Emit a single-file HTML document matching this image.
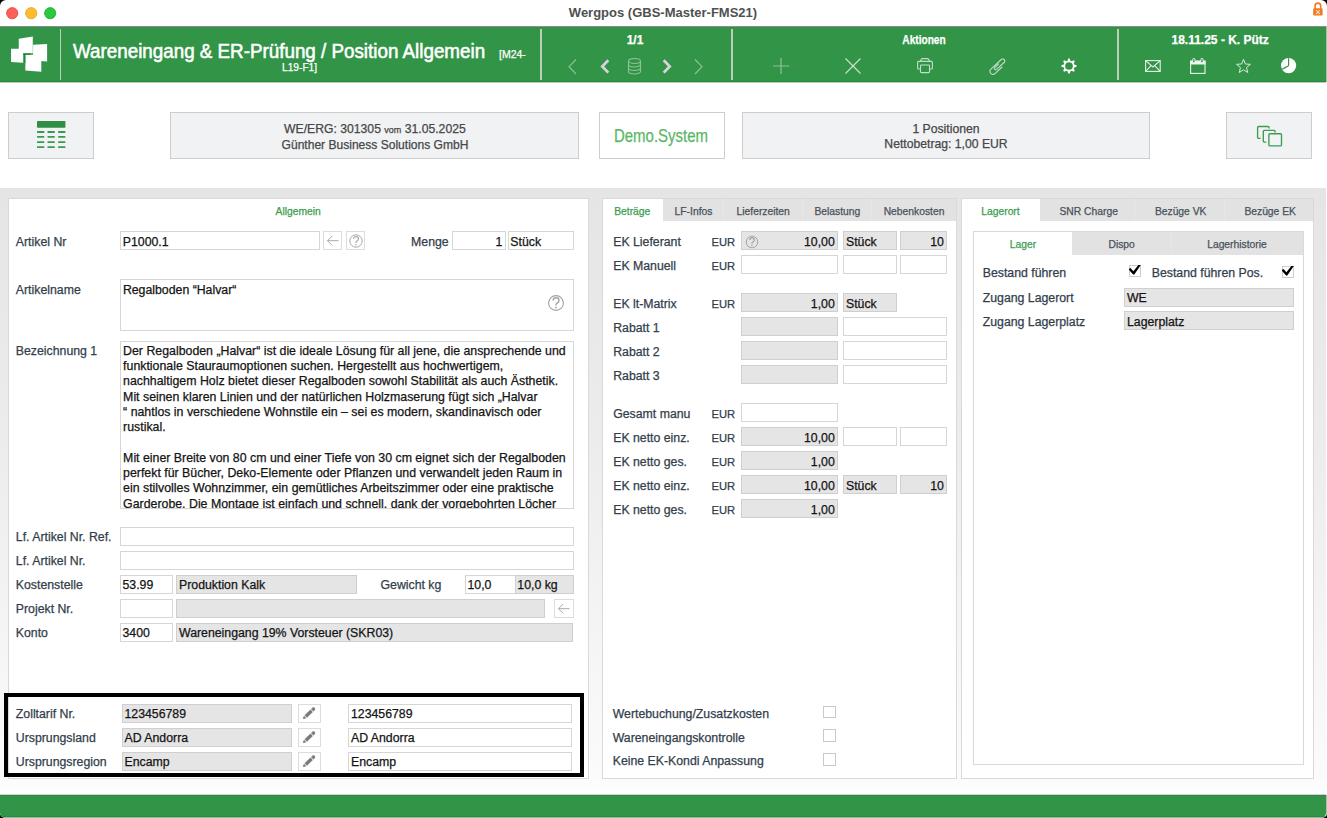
<!DOCTYPE html><html><head><meta charset="utf-8"><style>
html,body{margin:0;padding:0;background:#000;}
#w{position:absolute;left:0;top:0;width:1327px;height:818px;background:#fff;border-radius:6px 6px 5px 5px;overflow:hidden;}
.t{position:absolute;white-space:nowrap;font-family:"Liberation Sans",sans-serif;-webkit-text-stroke:0.25px currentColor;}
.b{position:absolute;box-sizing:border-box;}
svg{overflow:visible}
</style></head><body><div id="w">
<svg style="position:absolute;left:6.0px;top:6.5px;" width="12.4" height="12.4" viewBox="0 0 12.4 12.4"><circle cx="6.2" cy="6.2" r="5.6" fill="#fe5f57" stroke="#e0443e" stroke-width="0.8"/></svg>
<svg style="position:absolute;left:24.8px;top:6.5px;" width="12.4" height="12.4" viewBox="0 0 12.4 12.4"><circle cx="6.2" cy="6.2" r="5.6" fill="#febc2e" stroke="#dea123" stroke-width="0.8"/></svg>
<svg style="position:absolute;left:43.8px;top:6.5px;" width="12.4" height="12.4" viewBox="0 0 12.4 12.4"><circle cx="6.2" cy="6.2" r="5.6" fill="#28c840" stroke="#1aab29" stroke-width="0.8"/></svg>
<div class="t" style="left:663px;top:5.6px;font-size:13px;line-height:13px;color:#505050;font-weight:700;transform:translateX(-50%);-webkit-text-stroke:0;">Wergpos (GBS-Master-FMS21)</div>
<svg style="position:absolute;left:1313px;top:2.1px;" width="10" height="14" viewBox="0 0 10 14"><path d="M2.1 7 V3.9 A2.8 2.8 0 0 1 7.7 3.9 V7" fill="none" stroke="#f07a22" stroke-width="1.6"/><rect x="0.2" y="6.3" width="9.4" height="7.3" rx="0.8" fill="#f07a22"/><path d="M3 8 L6.8 12.2 M6.8 8 L3 12.2" stroke="#fcdcc2" stroke-width="1.1"/></svg>
<div class="b" style="left:0px;top:26px;width:1326px;height:1px;background:#8d8d8d;"></div>
<div class="b" style="left:0px;top:27px;width:1326px;height:55px;background:#329447;"></div>
<div class="b" style="left:1326px;top:26px;width:1px;height:56px;background:#9cc6a4;"></div>
<div class="b" style="left:0px;top:81px;width:1326px;height:1px;background:#1f8b37;"></div>
<div class="b" style="left:0px;top:82px;width:1326px;height:1px;background:#c4c8c4;"></div>
<div class="b" style="left:59.8px;top:29px;width:1.6px;height:51px;background:#b9cfbc;"></div>
<div class="b" style="left:540.3px;top:29px;width:1.6px;height:51px;background:#b9cfbc;"></div>
<div class="b" style="left:731.3px;top:29px;width:1.6px;height:51px;background:#b9cfbc;"></div>
<div class="b" style="left:1117.3px;top:29px;width:1.6px;height:51px;background:#b9cfbc;"></div>
<svg style="position:absolute;left:0px;top:0px;" width="60" height="82" viewBox="0 0 60 82">
<polygon points="18.75,38.8 32.8,36.6 32.8,53.3 18.75,53.3" fill="#fff"/>
<polygon points="11.05,48.7 23.2,48.7 23.2,62.7 11.05,61.9" fill="#fff"/>
<polygon points="33,44.85 47.1,44 47.1,61.4 33,60.6" fill="#fff"/>
<polygon points="25.35,54.75 41.3,54.75 41.3,71.8 25.35,70.4" fill="#fff"/>
<path d="M23.2 54.1 H30.6 M24.7 54.1 V62.8" stroke="#1d8637" stroke-width="1.3" fill="none"/>
<path d="M32.9 45 V53" stroke="#cfe5d4" stroke-width="0.8"/>
</svg>
<div class="t" style="left:73.3px;top:41.17px;font-size:20px;line-height:20px;color:#fff;font-weight:400;transform:scaleX(0.94);transform-origin:0 0;-webkit-text-stroke:0.55px #fff;">Wareneingang &amp; ER-Prüfung / Position Allgemein</div>
<div class="t" style="left:499px;top:48.71px;font-size:10.5px;line-height:10.5px;color:#fff;font-weight:400;">[M24-</div>
<div class="t" style="left:282px;top:63.37px;font-size:10.2px;line-height:10.2px;color:#fff;font-weight:400;">L19-F1]</div>
<div class="t" style="left:635px;top:34.04px;font-size:12px;line-height:12px;color:#fff;font-weight:700;transform:translateX(-50%);">1/1</div>
<div class="t" style="left:924.4px;top:33.74px;font-size:12px;line-height:12px;color:#fff;font-weight:700;transform:translateX(-50%);transform:translateX(-50%) scaleX(0.845);">Aktionen</div>
<div class="t" style="left:1220.2px;top:33.94px;font-size:12px;line-height:12px;color:#fff;font-weight:700;transform:translateX(-50%);">18.11.25 - K. Pütz</div>
<svg style="position:absolute;left:568px;top:58.5px;" width="9" height="16" viewBox="0 0 9 16"><path d="M8 0.5 L1 7.7 L8 15" fill="none" stroke="#8fc29a" stroke-width="1.1"/></svg>
<svg style="position:absolute;left:600px;top:58.8px;" width="10" height="15" viewBox="0 0 10 15"><path d="M8.3 1.2 L2.3 7.4 L8.3 13.6" fill="none" stroke="#d9d2dc" stroke-width="2.8"/></svg>
<svg style="position:absolute;left:628px;top:57.8px;" width="14" height="17" viewBox="0 0 14 17"><g fill="none" stroke="#8fc29a" stroke-width="1.1"><ellipse cx="6.5" cy="3" rx="6" ry="2.5"/><path d="M0.5 3 V13.5 A6 2.5 0 0 0 12.5 13.5 V3"/><path d="M0.5 6.5 A6 2.5 0 0 0 12.5 6.5 M0.5 10 A6 2.5 0 0 0 12.5 10"/></g></svg>
<svg style="position:absolute;left:662px;top:58.8px;" width="10" height="15" viewBox="0 0 10 15"><path d="M1.7 1.2 L7.7 7.4 L1.7 13.6" fill="none" stroke="#d9d2dc" stroke-width="2.8"/></svg>
<svg style="position:absolute;left:694.4px;top:58.5px;" width="9" height="16" viewBox="0 0 9 16"><path d="M1 0.5 L8 7.7 L1 15" fill="none" stroke="#8fc29a" stroke-width="1.1"/></svg>
<svg style="position:absolute;left:773px;top:58px;" width="16" height="16" viewBox="0 0 16 16"><path d="M8 0 V16 M0 8 H16" stroke="#8fc29a" stroke-width="1.2"/></svg>
<svg style="position:absolute;left:844.8px;top:58px;" width="16" height="16" viewBox="0 0 16 16"><path d="M0.5 0.5 L15.5 15.5 M15.5 0.5 L0.5 15.5" stroke="#cde3d1" stroke-width="1.1"/></svg>
<svg style="position:absolute;left:917px;top:58px;" width="17" height="16" viewBox="0 0 17 16"><g fill="none" stroke="#c3dec8" stroke-width="1.1"><path d="M3.4 3.2 L4.6 0.9 Q4.9 0.6 5.4 0.6 H10.6 Q11.1 0.6 11.4 0.9 L12.6 3.2"/><path d="M3.3 11 H1.5 Q0.6 11 0.6 10 V4.4 Q0.6 3.4 1.6 3.4 H14.4 Q15.4 3.4 15.4 4.4 V10 Q15.4 11 14.5 11 H12.7"/><rect x="3.5" y="7" width="9" height="7.6" rx="0.8"/></g></svg>
<svg style="position:absolute;left:984px;top:54px;" width="26" height="24" viewBox="0 0 26 24"><path d="M18.28 12.78 L10.98 19.58 L10.98 19.58 L10.34 20.03 L9.61 20.31 L8.83 20.38 L8.06 20.25 L7.35 19.93 L6.75 19.43 L6.30 18.79 L6.02 18.06 L5.95 17.28 L6.08 16.51 L6.40 15.80 L6.90 15.20 L6.90 15.20 L17.27 5.54 L17.27 5.54 L17.71 5.23 L18.22 5.04 L18.77 4.98 L19.31 5.07 L19.81 5.30 L20.23 5.65 L20.54 6.09 L20.74 6.61 L20.79 7.15 L20.70 7.69 L20.47 8.19 L20.12 8.61 L19.99 8.46 L12.54 15.40 L12.54 15.40 L12.26 15.60 L11.95 15.71 L11.61 15.75 L11.28 15.69 L10.97 15.55 L10.71 15.33 L10.51 15.06 L10.39 14.74 L10.36 14.41 L10.42 14.07 L10.56 13.76 L10.77 13.50 L10.77 13.50 L14.86 9.69" fill="none" stroke="#bfdcc5" stroke-width="1.15" stroke-linejoin="round"/></svg>
<svg style="position:absolute;left:1061.3px;top:58px;" width="16" height="16" viewBox="0 0 16 16"><polygon points="12.60,6.30 15.50,7.25 15.50,8.75 12.60,9.70" fill="#fff"/><polygon points="12.45,10.05 13.83,12.77 12.77,13.83 10.05,12.45" fill="#fff"/><polygon points="9.70,12.60 8.75,15.50 7.25,15.50 6.30,12.60" fill="#fff"/><polygon points="5.95,12.45 3.23,13.83 2.17,12.77 3.55,10.05" fill="#fff"/><polygon points="3.40,9.70 0.50,8.75 0.50,7.25 3.40,6.30" fill="#fff"/><polygon points="3.55,5.95 2.17,3.23 3.23,2.17 5.95,3.55" fill="#fff"/><polygon points="6.30,3.40 7.25,0.50 8.75,0.50 9.70,3.40" fill="#fff"/><polygon points="10.05,3.55 12.77,2.17 13.83,3.23 12.45,5.95" fill="#fff"/><circle cx="8" cy="8" r="4.6" fill="none" stroke="#fff" stroke-width="1.5"/></svg>
<svg style="position:absolute;left:1144.8px;top:60.2px;" width="16" height="12" viewBox="0 0 16 12"><g fill="none" stroke="#e6f0e8" stroke-width="1.1"><rect x="0.6" y="0.6" width="14.6" height="10.8"/><path d="M0.6 0.6 L7.9 7 L15.2 0.6 M0.6 11.4 L6 5.6 M15.2 11.4 L9.8 5.6"/></g></svg>
<svg style="position:absolute;left:1189.8px;top:58px;" width="16" height="16" viewBox="0 0 16 16"><g fill="none" stroke="#eef5ef" stroke-width="1.1"><rect x="0.6" y="3.2" width="14.4" height="12.2"/></g><rect x="0.1" y="2.7" width="15.4" height="3.8" fill="#eef5ef"/><g fill="#329447" stroke="#eef5ef" stroke-width="1"><rect x="2.7" y="0.5" width="2.3" height="4.4" rx="1.15"/><rect x="10.8" y="0.5" width="2.3" height="4.4" rx="1.15"/></g></svg>
<svg style="position:absolute;left:1236px;top:58.9px;" width="15" height="14" viewBox="0 0 15 14"><polygon points="7.50,0.30 9.38,5.01 14.44,5.34 10.54,8.59 11.79,13.51 7.50,10.80 3.21,13.51 4.46,8.59 0.56,5.34 5.62,5.01" fill="none" stroke="#d8e9dc" stroke-width="1.0" stroke-linejoin="round"/></svg>
<svg style="position:absolute;left:1280.7px;top:58.3px;" width="16" height="16" viewBox="0 0 16 16"><circle cx="7.6" cy="7.6" r="7.6" fill="#fff"/><path d="M7.6 7.7 V0.3 M7.6 7.7 L1.4 11.1" stroke="#329447" stroke-width="1.2"/></svg>
<div class="b" style="left:8.4px;top:112px;width:85.3px;height:47.3px;background:#f1f2f4;border:1px solid #cdcdcd;"></div>
<svg style="position:absolute;left:36.5px;top:121.3px;" width="29" height="28" viewBox="0 0 29 28"><rect x="0" y="0" width="28.4" height="6.7" rx="0.6" fill="#2e8f45"/><rect x="0" y="10.1" width="7.3" height="1.8" rx="0.5" fill="#3a9a50"/><rect x="10.5" y="10.1" width="7.3" height="1.8" rx="0.5" fill="#3a9a50"/><rect x="21.1" y="10.1" width="7.3" height="1.8" rx="0.5" fill="#3a9a50"/><rect x="0" y="15.0" width="7.3" height="1.8" rx="0.5" fill="#3a9a50"/><rect x="10.5" y="15.0" width="7.3" height="1.8" rx="0.5" fill="#3a9a50"/><rect x="21.1" y="15.0" width="7.3" height="1.8" rx="0.5" fill="#3a9a50"/><rect x="0" y="20.200000000000003" width="7.3" height="1.8" rx="0.5" fill="#3a9a50"/><rect x="10.5" y="20.200000000000003" width="7.3" height="1.8" rx="0.5" fill="#3a9a50"/><rect x="21.1" y="20.200000000000003" width="7.3" height="1.8" rx="0.5" fill="#3a9a50"/><rect x="0" y="25.200000000000003" width="7.3" height="1.8" rx="0.5" fill="#3a9a50"/><rect x="10.5" y="25.200000000000003" width="7.3" height="1.8" rx="0.5" fill="#3a9a50"/><rect x="21.1" y="25.200000000000003" width="7.3" height="1.8" rx="0.5" fill="#3a9a50"/></svg>
<div class="b" style="left:170.4px;top:112px;width:409.0px;height:47.3px;background:#f1f2f4;border:1px solid #cdcdcd;"></div>
<div class="t" style="left:170.4px;width:409px;top:123.17px;font-size:12.2px;line-height:12.2px;color:#474747;text-align:center">WE/ERG: 301305 <span style="font-size:9px">vom</span> 31.05.2025</div>
<div class="t" style="left:375px;top:138.5px;font-size:12.05px;line-height:12.05px;color:#474747;font-weight:400;transform:translateX(-50%);">Günther Business Solutions GmbH</div>
<div class="b" style="left:598.5px;top:112px;width:126.0px;height:47.3px;background:#fff;border:1px solid #cdcdcd;"></div>
<div class="t" style="left:661.2px;top:127.24px;font-size:18.5px;line-height:18.5px;color:#5ab766;font-weight:400;transform:translateX(-50%);transform:translateX(-50%) scaleX(0.81);">Demo.System</div>
<div class="b" style="left:742px;top:112px;width:408.3px;height:47.3px;background:#f1f2f4;border:1px solid #cdcdcd;"></div>
<div class="t" style="left:946px;top:123.17px;font-size:12.2px;line-height:12.2px;color:#474747;font-weight:400;transform:translateX(-50%);">1 Positionen</div>
<div class="t" style="left:946px;top:138.37px;font-size:12.2px;line-height:12.2px;color:#474747;font-weight:400;transform:translateX(-50%);">Nettobetrag: 1,00 EUR</div>
<div class="b" style="left:1226.4px;top:112px;width:85.4px;height:47.3px;background:#f1f2f4;border:1px solid #cdcdcd;"></div>
<svg style="position:absolute;left:1256px;top:124.5px;" width="28" height="23" viewBox="0 0 28 23"><g fill="none" stroke="#3d9b52" stroke-width="1.35"><path d="M4.6 13.3 H2.6 Q1.6 13.3 1.6 12.3 V2.5 Q1.6 1.5 2.6 1.5 H12 Q13 1.5 13 2.5 V3.6"/><path d="M10.3 17.1 H8.3 Q7.3 17.1 7.3 16.1 V6.3 Q7.3 5.3 8.3 5.3 H18.1 Q19.1 5.3 19.1 6.3 V7.6"/><rect x="12.9" y="8.7" width="12.6" height="12.2" rx="1" fill="#f2f3f5"/></g></svg>
<div class="b" style="left:0;top:188px;width:1326px;height:607px;background:linear-gradient(#e5e5e5 0px,#ececec 250px,#fbfbfb 590px,#fff 607px)"></div>
<div class="b" style="left:8px;top:198px;width:581px;height:581px;background:#fff;border:1px solid #d9d9d9;"></div>
<div class="b" style="left:602px;top:198px;width:355px;height:581px;background:#fff;border:1px solid #d9d9d9;"></div>
<div class="b" style="left:961px;top:198px;width:352.5px;height:581px;background:#fff;border:1px solid #d9d9d9;"></div>
<div class="t" style="left:298.2px;top:206.88px;font-size:10.3px;line-height:10.3px;color:#3a9d50;font-weight:400;transform:translateX(-50%);">Allgemein</div>
<div class="t" style="left:15.8px;top:236.29px;font-size:12.3px;line-height:12.3px;color:#323e4b;font-weight:400;">Artikel Nr</div>
<div class="b" style="left:120px;top:231px;width:200px;height:19px;background:#fff;border:1px solid #d6d6d6;"></div>
<div class="t" style="left:122.8px;top:236.29px;font-size:12.3px;line-height:12.3px;color:#141414;font-weight:400;">P1000.1</div>
<div class="b" style="left:323px;top:231px;width:19px;height:19px;background:#fff;border:1px solid #dcdcdc;"></div>
<svg style="position:absolute;left:326px;top:234px;" width="14" height="14" viewBox="0 0 14 14"><path d="M12.5 6.7 H1.5 M6.2 2 L1.5 6.7 L6.2 11.4" fill="none" stroke="#a8a8a8" stroke-width="1"/></svg>
<div class="b" style="left:346px;top:231px;width:19px;height:19px;background:#fff;border:1px solid #dcdcdc;"></div>
<svg style="position:absolute;left:355.6px;top:240.6px;" width="1" height="1" viewBox="0 0 1 1"><circle cx="0" cy="0" r="6.2" fill="none" stroke="#a9a9a9" stroke-width="1"/><path d="M-2.38 -2.07 Q-2.38 -4.44 0 -4.44 Q2.48 -4.44 2.48 -2.17 Q2.48 -0.72 0.93 0 Q-0.10 0.62 -0.10 2.07" fill="none" stroke="#a9a9a9" stroke-width="1.19"/><circle cx="-0.10" cy="3.82" r="0.78" fill="#a9a9a9"/></svg>
<div class="t" style="left:411.1px;top:236.29px;font-size:12.3px;line-height:12.3px;color:#323e4b;font-weight:400;">Menge</div>
<div class="b" style="left:451.5px;top:231px;width:54.1px;height:19px;background:#fff;border:1px solid #d6d6d6;"></div>
<div class="t" style="left:502.3px;top:236.29px;font-size:12.3px;line-height:12.3px;color:#141414;font-weight:400;transform:translateX(-100%);">1</div>
<div class="b" style="left:508px;top:231px;width:65.6px;height:19px;background:#fff;border:1px solid #d6d6d6;"></div>
<div class="t" style="left:510.3px;top:236.29px;font-size:12.3px;line-height:12.3px;color:#141414;font-weight:400;">Stück</div>
<div class="t" style="left:15.8px;top:283.89px;font-size:12.3px;line-height:12.3px;color:#323e4b;font-weight:400;">Artikelname</div>
<div class="b" style="left:120px;top:279px;width:453.6px;height:52.3px;background:#fff;border:1px solid #d6d6d6;"></div>
<div class="t" style="left:122.9px;top:283.89px;font-size:12.3px;line-height:12.3px;color:#141414;font-weight:400;">Regalboden “Halvar“</div>
<svg style="position:absolute;left:556.2px;top:302.9px;" width="1" height="1" viewBox="0 0 1 1"><circle cx="0" cy="0" r="7.4" fill="none" stroke="#a3a3a3" stroke-width="1.1"/><path d="M-2.84 -2.47 Q-2.84 -5.30 0 -5.30 Q2.96 -5.30 2.96 -2.59 Q2.96 -0.86 1.11 0 Q-0.12 0.74 -0.12 2.47" fill="none" stroke="#a3a3a3" stroke-width="1.42"/><circle cx="-0.12" cy="4.56" r="0.93" fill="#a3a3a3"/></svg>
<div class="t" style="left:15.8px;top:345.39px;font-size:12.3px;line-height:12.3px;color:#323e4b;font-weight:400;">Bezeichnung 1</div>
<div class="b" style="left:120px;top:341px;width:453.6px;height:168px;background:#fff;border:1px solid #d6d6d6;"></div>
<div class="b" style="left:121px;top:342px;width:451px;height:166px;overflow:hidden;">
<div class="t" style="left:2.1px;top:1.88px;font-size:12.35px;line-height:15.28px;color:#141414">Der Regalboden „Halvar“ ist die ideale Lösung für all jene, die ansprechende und<br>funktionale Stauraumoptionen suchen. Hergestellt aus hochwertigem,<br>nachhaltigem Holz bietet dieser Regalboden sowohl Stabilität als auch Ästhetik.<br>Mit seinen klaren Linien und der natürlichen Holzmaserung fügt sich „Halvar<br>“ nahtlos in verschiedene Wohnstile ein – sei es modern, skandinavisch oder<br>rustikal.<br>&nbsp;<br>Mit einer Breite von 80 cm und einer Tiefe von 30 cm eignet sich der Regalboden<br>perfekt für Bücher, Deko-Elemente oder Pflanzen und verwandelt jeden Raum in<br>ein stilvolles Wohnzimmer, ein gemütliches Arbeitszimmer oder eine praktische<br>Garderobe. Die Montage ist einfach und schnell, dank der vorgebohrten Löcher</div></div>
<div class="t" style="left:15.8px;top:531.49px;font-size:12.3px;line-height:12.3px;color:#323e4b;font-weight:400;">Lf. Artikel Nr. Ref.</div>
<div class="t" style="left:15.8px;top:555.49px;font-size:12.3px;line-height:12.3px;color:#323e4b;font-weight:400;">Lf. Artikel Nr.</div>
<div class="t" style="left:15.8px;top:579.49px;font-size:12.3px;line-height:12.3px;color:#323e4b;font-weight:400;">Kostenstelle</div>
<div class="t" style="left:15.8px;top:603.49px;font-size:12.3px;line-height:12.3px;color:#323e4b;font-weight:400;">Projekt Nr.</div>
<div class="t" style="left:15.8px;top:627.49px;font-size:12.3px;line-height:12.3px;color:#323e4b;font-weight:400;">Konto</div>
<div class="b" style="left:120px;top:527px;width:453.6px;height:19px;background:#fff;border:1px solid #d6d6d6;"></div>
<div class="b" style="left:120px;top:551px;width:453.6px;height:19px;background:#fff;border:1px solid #d6d6d6;"></div>
<div class="b" style="left:120px;top:575px;width:53px;height:19px;background:#fff;border:1px solid #d6d6d6;"></div>
<div class="t" style="left:122.5px;top:579.49px;font-size:12.3px;line-height:12.3px;color:#141414;font-weight:400;">53.99</div>
<div class="b" style="left:176.4px;top:575px;width:180.2px;height:19px;background:#e5e5e5;border:1px solid #cfcfcf;"></div>
<div class="t" style="left:179px;top:579.49px;font-size:12.3px;line-height:12.3px;color:#141414;font-weight:400;">Produktion Kalk</div>
<div class="t" style="left:380.5px;top:579.49px;font-size:12.3px;line-height:12.3px;color:#323e4b;font-weight:400;">Gewicht kg</div>
<div class="b" style="left:465px;top:575px;width:50.5px;height:19px;background:#fff;border:1px solid #d6d6d6;"></div>
<div class="t" style="left:467.5px;top:579.49px;font-size:12.3px;line-height:12.3px;color:#141414;font-weight:400;">10,0</div>
<div class="b" style="left:514.8px;top:575px;width:58.8px;height:19px;background:#e5e5e5;border:1px solid #cfcfcf;"></div>
<div class="t" style="left:517.3px;top:579.49px;font-size:12.3px;line-height:12.3px;color:#141414;font-weight:400;">10,0 kg</div>
<div class="b" style="left:120px;top:599px;width:53px;height:19px;background:#fff;border:1px solid #d6d6d6;"></div>
<div class="b" style="left:176.4px;top:599px;width:368.9px;height:19px;background:#e5e5e5;border:1px solid #cfcfcf;"></div>
<div class="b" style="left:554.4px;top:599px;width:19.2px;height:19px;background:#fff;border:1px solid #dcdcdc;"></div>
<svg style="position:absolute;left:557px;top:602px;" width="14" height="14" viewBox="0 0 14 14"><path d="M12.5 6.7 H1.5 M6.2 2 L1.5 6.7 L6.2 11.4" fill="none" stroke="#a8a8a8" stroke-width="1"/></svg>
<div class="b" style="left:120px;top:623px;width:53px;height:19px;background:#fff;border:1px solid #d6d6d6;"></div>
<div class="t" style="left:122.5px;top:627.49px;font-size:12.3px;line-height:12.3px;color:#141414;font-weight:400;">3400</div>
<div class="b" style="left:176.4px;top:623px;width:396.4px;height:19px;background:#e5e5e5;border:1px solid #cfcfcf;"></div>
<div class="t" style="left:179px;top:627.49px;font-size:12.3px;line-height:12.3px;color:#141414;font-weight:400;">Wareneingang 19% Vorsteuer (SKR03)</div>
<div class="b" style="left:4px;top:693px;width:580px;height:84px;border:4px solid #000;"></div>
<div class="t" style="left:15.8px;top:708.49px;font-size:12.3px;line-height:12.3px;color:#323e4b;font-weight:400;">Zolltarif Nr.</div>
<div class="b" style="left:122px;top:704px;width:170px;height:19px;background:#e5e5e5;border:1px solid #cfcfcf;"></div>
<div class="t" style="left:124.5px;top:708.49px;font-size:12.3px;line-height:12.3px;color:#141414;font-weight:400;">123456789</div>
<div class="b" style="left:297.5px;top:704px;width:23.0px;height:18.5px;background:#fff;border:1px solid #dcdcdc;"></div>
<svg style="position:absolute;left:296px;top:702px;" width="26" height="22" viewBox="0 0 26 22"><polygon points="6.91,16.37 7.60,17.10 10.35,16.22 7.94,13.68" fill="#7b7b7b"/><polygon points="8.52,13.13 10.93,15.67 16.88,10.03 14.47,7.49" fill="#7b7b7b"/><polygon points="15.05,6.94 17.46,9.48 18.91,8.10 19.26,6.87 18.80,5.80 17.75,5.28 16.51,5.56" fill="#7b7b7b"/></svg>
<div class="b" style="left:348px;top:704px;width:224.4px;height:19px;background:#fff;border:1px solid #d6d6d6;"></div>
<div class="t" style="left:351px;top:708.49px;font-size:12.3px;line-height:12.3px;color:#141414;font-weight:400;">123456789</div>
<div class="t" style="left:15.8px;top:732.49px;font-size:12.3px;line-height:12.3px;color:#323e4b;font-weight:400;">Ursprungsland</div>
<div class="b" style="left:122px;top:728px;width:170px;height:19px;background:#e5e5e5;border:1px solid #cfcfcf;"></div>
<div class="t" style="left:124.5px;top:732.49px;font-size:12.3px;line-height:12.3px;color:#141414;font-weight:400;">AD Andorra</div>
<div class="b" style="left:297.5px;top:728px;width:23.0px;height:18.5px;background:#fff;border:1px solid #dcdcdc;"></div>
<svg style="position:absolute;left:296px;top:726px;" width="26" height="22" viewBox="0 0 26 22"><polygon points="6.91,16.37 7.60,17.10 10.35,16.22 7.94,13.68" fill="#7b7b7b"/><polygon points="8.52,13.13 10.93,15.67 16.88,10.03 14.47,7.49" fill="#7b7b7b"/><polygon points="15.05,6.94 17.46,9.48 18.91,8.10 19.26,6.87 18.80,5.80 17.75,5.28 16.51,5.56" fill="#7b7b7b"/></svg>
<div class="b" style="left:348px;top:728px;width:224.4px;height:19px;background:#fff;border:1px solid #d6d6d6;"></div>
<div class="t" style="left:351px;top:732.49px;font-size:12.3px;line-height:12.3px;color:#141414;font-weight:400;">AD Andorra</div>
<div class="t" style="left:15.8px;top:756.49px;font-size:12.3px;line-height:12.3px;color:#323e4b;font-weight:400;">Ursprungsregion</div>
<div class="b" style="left:122px;top:752px;width:170px;height:19px;background:#e5e5e5;border:1px solid #cfcfcf;"></div>
<div class="t" style="left:124.5px;top:756.49px;font-size:12.3px;line-height:12.3px;color:#141414;font-weight:400;">Encamp</div>
<div class="b" style="left:297.5px;top:752px;width:23.0px;height:18.5px;background:#fff;border:1px solid #dcdcdc;"></div>
<svg style="position:absolute;left:296px;top:750px;" width="26" height="22" viewBox="0 0 26 22"><polygon points="6.91,16.37 7.60,17.10 10.35,16.22 7.94,13.68" fill="#7b7b7b"/><polygon points="8.52,13.13 10.93,15.67 16.88,10.03 14.47,7.49" fill="#7b7b7b"/><polygon points="15.05,6.94 17.46,9.48 18.91,8.10 19.26,6.87 18.80,5.80 17.75,5.28 16.51,5.56" fill="#7b7b7b"/></svg>
<div class="b" style="left:348px;top:752px;width:224.4px;height:19px;background:#fff;border:1px solid #d6d6d6;"></div>
<div class="t" style="left:351px;top:756.49px;font-size:12.3px;line-height:12.3px;color:#141414;font-weight:400;">Encamp</div>
<div class="b" style="left:663px;top:199px;width:293px;height:22.3px;background:#e2e2e2;"></div>
<div class="b" style="left:723.1px;top:199px;width:1.0px;height:22.3px;background:#e7e7e7;"></div>
<div class="b" style="left:801.8px;top:199px;width:1.0px;height:22.3px;background:#e7e7e7;"></div>
<div class="b" style="left:871.4px;top:199px;width:1.0px;height:22.3px;background:#e7e7e7;"></div>
<div class="t" style="left:614.2px;top:207.18px;font-size:10.3px;line-height:10.3px;color:#3a9d50;font-weight:400;">Beträge</div>
<div class="t" style="left:674.6px;top:207.18px;font-size:10.3px;line-height:10.3px;color:#48525c;font-weight:400;">LF-Infos</div>
<div class="t" style="left:736.6px;top:207.18px;font-size:10.3px;line-height:10.3px;color:#48525c;font-weight:400;">Lieferzeiten</div>
<div class="t" style="left:814.4px;top:207.18px;font-size:10.3px;line-height:10.3px;color:#48525c;font-weight:400;">Belastung</div>
<div class="t" style="left:883.7px;top:207.18px;font-size:10.3px;line-height:10.3px;color:#48525c;font-weight:400;">Nebenkosten</div>
<div class="t" style="left:613.2px;top:235.59px;font-size:12.3px;line-height:12.3px;color:#323e4b;font-weight:400;">EK Lieferant</div>
<div class="t" style="left:711.5px;top:236.52px;font-size:11.2px;line-height:11.2px;color:#323e4b;font-weight:400;">EUR</div>
<div class="b" style="left:741px;top:231px;width:97px;height:19px;background:#e5e5e5;border:1px solid #cfcfcf;"></div>
<svg style="position:absolute;left:751.7px;top:242px;" width="1" height="1" viewBox="0 0 1 1"><circle cx="0" cy="0" r="5.8" fill="none" stroke="#a0a0a0" stroke-width="0.95"/><path d="M-2.22 -1.93 Q-2.22 -4.16 0 -4.16 Q2.32 -4.16 2.32 -2.03 Q2.32 -0.68 0.87 0 Q-0.10 0.58 -0.10 1.93" fill="none" stroke="#a0a0a0" stroke-width="1.11"/><circle cx="-0.10" cy="3.58" r="0.72" fill="#a0a0a0"/></svg>
<div class="t" style="left:834.8px;top:235.69px;font-size:12.3px;line-height:12.3px;color:#141414;font-weight:400;transform:translateX(-100%);">10,00</div>
<div class="b" style="left:843.3px;top:231px;width:53.9px;height:19px;background:#e5e5e5;border:1px solid #cfcfcf;"></div>
<div class="t" style="left:846px;top:235.69px;font-size:12.3px;line-height:12.3px;color:#141414;font-weight:400;">Stück</div>
<div class="b" style="left:900.3px;top:231px;width:46.7px;height:19px;background:#e5e5e5;border:1px solid #cfcfcf;"></div>
<div class="t" style="left:943.9px;top:235.69px;font-size:12.3px;line-height:12.3px;color:#141414;font-weight:400;transform:translateX(-100%);">10</div>
<div class="t" style="left:613.2px;top:259.59px;font-size:12.3px;line-height:12.3px;color:#323e4b;font-weight:400;">EK Manuell</div>
<div class="t" style="left:711.5px;top:260.52px;font-size:11.2px;line-height:11.2px;color:#323e4b;font-weight:400;">EUR</div>
<div class="b" style="left:741px;top:255px;width:97px;height:19px;background:#fff;border:1px solid #d6d6d6;"></div>
<div class="b" style="left:843.3px;top:255px;width:53.9px;height:19px;background:#fff;border:1px solid #d6d6d6;"></div>
<div class="b" style="left:900.3px;top:255px;width:46.7px;height:19px;background:#fff;border:1px solid #d6d6d6;"></div>
<div class="t" style="left:613.2px;top:297.59px;font-size:12.3px;line-height:12.3px;color:#323e4b;font-weight:400;">EK lt-Matrix</div>
<div class="t" style="left:711.5px;top:298.52px;font-size:11.2px;line-height:11.2px;color:#323e4b;font-weight:400;">EUR</div>
<div class="b" style="left:741px;top:293px;width:97px;height:19px;background:#e5e5e5;border:1px solid #cfcfcf;"></div>
<div class="t" style="left:834.8px;top:297.69px;font-size:12.3px;line-height:12.3px;color:#141414;font-weight:400;transform:translateX(-100%);">1,00</div>
<div class="b" style="left:843.3px;top:293px;width:53.9px;height:19px;background:#e5e5e5;border:1px solid #cfcfcf;"></div>
<div class="t" style="left:846px;top:297.69px;font-size:12.3px;line-height:12.3px;color:#141414;font-weight:400;">Stück</div>
<div class="t" style="left:613.2px;top:321.59px;font-size:12.3px;line-height:12.3px;color:#323e4b;font-weight:400;">Rabatt 1</div>
<div class="b" style="left:741px;top:317px;width:97px;height:19px;background:#e5e5e5;border:1px solid #cfcfcf;"></div>
<div class="b" style="left:843.3px;top:317px;width:103.7px;height:19px;background:#fff;border:1px solid #d6d6d6;"></div>
<div class="t" style="left:613.2px;top:345.59px;font-size:12.3px;line-height:12.3px;color:#323e4b;font-weight:400;">Rabatt 2</div>
<div class="b" style="left:741px;top:341px;width:97px;height:19px;background:#e5e5e5;border:1px solid #cfcfcf;"></div>
<div class="b" style="left:843.3px;top:341px;width:103.7px;height:19px;background:#fff;border:1px solid #d6d6d6;"></div>
<div class="t" style="left:613.2px;top:369.59px;font-size:12.3px;line-height:12.3px;color:#323e4b;font-weight:400;">Rabatt 3</div>
<div class="b" style="left:741px;top:365px;width:97px;height:19px;background:#e5e5e5;border:1px solid #cfcfcf;"></div>
<div class="b" style="left:843.3px;top:365px;width:103.7px;height:19px;background:#fff;border:1px solid #d6d6d6;"></div>
<div class="t" style="left:613.2px;top:407.59px;font-size:12.3px;line-height:12.3px;color:#323e4b;font-weight:400;">Gesamt manu</div>
<div class="t" style="left:711.5px;top:408.52px;font-size:11.2px;line-height:11.2px;color:#323e4b;font-weight:400;">EUR</div>
<div class="b" style="left:741px;top:403px;width:97px;height:19px;background:#fff;border:1px solid #d6d6d6;"></div>
<div class="t" style="left:613.2px;top:431.59px;font-size:12.3px;line-height:12.3px;color:#323e4b;font-weight:400;">EK netto einz.</div>
<div class="t" style="left:711.5px;top:432.52px;font-size:11.2px;line-height:11.2px;color:#323e4b;font-weight:400;">EUR</div>
<div class="b" style="left:741px;top:427px;width:97px;height:19px;background:#e5e5e5;border:1px solid #cfcfcf;"></div>
<div class="t" style="left:834.8px;top:431.69px;font-size:12.3px;line-height:12.3px;color:#141414;font-weight:400;transform:translateX(-100%);">10,00</div>
<div class="b" style="left:843.3px;top:427px;width:53.9px;height:19px;background:#fff;border:1px solid #d6d6d6;"></div>
<div class="b" style="left:900.3px;top:427px;width:46.7px;height:19px;background:#fff;border:1px solid #d6d6d6;"></div>
<div class="t" style="left:613.2px;top:455.59px;font-size:12.3px;line-height:12.3px;color:#323e4b;font-weight:400;">EK netto ges.</div>
<div class="t" style="left:711.5px;top:456.52px;font-size:11.2px;line-height:11.2px;color:#323e4b;font-weight:400;">EUR</div>
<div class="b" style="left:741px;top:451px;width:97px;height:19px;background:#e5e5e5;border:1px solid #cfcfcf;"></div>
<div class="t" style="left:834.8px;top:455.69px;font-size:12.3px;line-height:12.3px;color:#141414;font-weight:400;transform:translateX(-100%);">1,00</div>
<div class="t" style="left:613.2px;top:479.59px;font-size:12.3px;line-height:12.3px;color:#323e4b;font-weight:400;">EK netto einz.</div>
<div class="t" style="left:711.5px;top:480.52px;font-size:11.2px;line-height:11.2px;color:#323e4b;font-weight:400;">EUR</div>
<div class="b" style="left:741px;top:475px;width:97px;height:19px;background:#e5e5e5;border:1px solid #cfcfcf;"></div>
<div class="t" style="left:834.8px;top:479.69px;font-size:12.3px;line-height:12.3px;color:#141414;font-weight:400;transform:translateX(-100%);">10,00</div>
<div class="b" style="left:843.3px;top:475px;width:53.9px;height:19px;background:#e5e5e5;border:1px solid #cfcfcf;"></div>
<div class="t" style="left:846px;top:479.69px;font-size:12.3px;line-height:12.3px;color:#141414;font-weight:400;">Stück</div>
<div class="b" style="left:900.3px;top:475px;width:46.7px;height:19px;background:#e5e5e5;border:1px solid #cfcfcf;"></div>
<div class="t" style="left:943.9px;top:479.69px;font-size:12.3px;line-height:12.3px;color:#141414;font-weight:400;transform:translateX(-100%);">10</div>
<div class="t" style="left:613.2px;top:503.59px;font-size:12.3px;line-height:12.3px;color:#323e4b;font-weight:400;">EK netto ges.</div>
<div class="t" style="left:711.5px;top:504.52px;font-size:11.2px;line-height:11.2px;color:#323e4b;font-weight:400;">EUR</div>
<div class="b" style="left:741px;top:499px;width:97px;height:19px;background:#e5e5e5;border:1px solid #cfcfcf;"></div>
<div class="t" style="left:834.8px;top:503.69px;font-size:12.3px;line-height:12.3px;color:#141414;font-weight:400;transform:translateX(-100%);">1,00</div>
<div class="t" style="left:612.7px;top:708.29px;font-size:12.3px;line-height:12.3px;color:#323e4b;font-weight:400;">Wertebuchung/Zusatzkosten</div>
<div class="b" style="left:823px;top:705.9px;width:13px;height:12.5px;background:#fff;border:1px solid #c9c9c9;"></div>
<div class="t" style="left:612.7px;top:731.79px;font-size:12.3px;line-height:12.3px;color:#323e4b;font-weight:400;">Wareneingangskontrolle</div>
<div class="b" style="left:823px;top:729.4px;width:13px;height:12.5px;background:#fff;border:1px solid #c9c9c9;"></div>
<div class="t" style="left:612.7px;top:755.49px;font-size:12.3px;line-height:12.3px;color:#323e4b;font-weight:400;">Keine EK-Kondi Anpassung</div>
<div class="b" style="left:823px;top:753.1px;width:13px;height:12.5px;background:#fff;border:1px solid #c9c9c9;"></div>
<div class="b" style="left:1039.5px;top:199px;width:273.0px;height:22.3px;background:#e2e2e2;"></div>
<div class="b" style="left:1134.1px;top:199px;width:1.0px;height:22.3px;background:#e7e7e7;"></div>
<div class="b" style="left:1223.5px;top:199px;width:1.0px;height:22.3px;background:#e7e7e7;"></div>
<div class="t" style="left:981.3px;top:206.98px;font-size:10.3px;line-height:10.3px;color:#3a9d50;font-weight:400;">Lagerort</div>
<div class="t" style="left:1059.5px;top:206.98px;font-size:10.3px;line-height:10.3px;color:#48525c;font-weight:400;">SNR Charge</div>
<div class="t" style="left:1154.9px;top:206.98px;font-size:10.3px;line-height:10.3px;color:#48525c;font-weight:400;">Bezüge VK</div>
<div class="t" style="left:1244.4px;top:206.98px;font-size:10.3px;line-height:10.3px;color:#48525c;font-weight:400;">Bezüge EK</div>
<div class="b" style="left:973px;top:231px;width:331px;height:534px;background:#fff;border:1px solid #d9d9d9;"></div>
<div class="b" style="left:1072px;top:232px;width:231px;height:22.6px;background:#e2e2e2;"></div>
<div class="b" style="left:1170.5px;top:232px;width:1.0px;height:22.6px;background:#e7e7e7;"></div>
<div class="t" style="left:1009.8px;top:239.88px;font-size:10.3px;line-height:10.3px;color:#3a9d50;font-weight:400;">Lager</div>
<div class="t" style="left:1108.5px;top:239.88px;font-size:10.3px;line-height:10.3px;color:#48525c;font-weight:400;">Dispo</div>
<div class="t" style="left:1207.2px;top:239.88px;font-size:10.3px;line-height:10.3px;color:#48525c;font-weight:400;">Lagerhistorie</div>
<div class="t" style="left:982.7px;top:266.99px;font-size:12.3px;line-height:12.3px;color:#323e4b;font-weight:400;">Bestand führen</div>
<div class="b" style="left:1129px;top:264.8px;width:12px;height:12.0px;background:#fff;border:1px solid #cdcdcd;"></div>
<svg style="position:absolute;left:1129px;top:264.8px;" width="12" height="12" viewBox="0 0 12 12"><polygon points="0.1,3.8 1.5,3.0 4.4,6.3 9.4,0.1 11.8,0.1 5.3,9.4 4.1,9.6 0.1,4.9" fill="#000"/></svg>
<div class="t" style="left:1151.7px;top:267.29px;font-size:12.3px;line-height:12.3px;color:#323e4b;font-weight:400;">Bestand führen Pos.</div>
<div class="b" style="left:1281.8px;top:265.8px;width:12.0px;height:12.0px;background:#fff;border:1px solid #cdcdcd;"></div>
<svg style="position:absolute;left:1281.8px;top:265.8px;" width="12" height="12" viewBox="0 0 12 12"><polygon points="0.1,3.8 1.5,3.0 4.4,6.3 9.4,0.1 11.8,0.1 5.3,9.4 4.1,9.6 0.1,4.9" fill="#000"/></svg>
<div class="t" style="left:982.7px;top:291.89px;font-size:12.3px;line-height:12.3px;color:#323e4b;font-weight:400;">Zugang Lagerort</div>
<div class="b" style="left:1124.3px;top:287.5px;width:169.4px;height:19.0px;background:#e5e5e5;border:1px solid #cfcfcf;"></div>
<div class="t" style="left:1127px;top:292.19px;font-size:12.3px;line-height:12.3px;color:#141414;font-weight:400;">WE</div>
<div class="t" style="left:982.7px;top:315.69px;font-size:12.3px;line-height:12.3px;color:#323e4b;font-weight:400;">Zugang Lagerplatz</div>
<div class="b" style="left:1124.3px;top:311.4px;width:169.4px;height:19.0px;background:#e5e5e5;border:1px solid #cfcfcf;"></div>
<div class="t" style="left:1127px;top:316.09px;font-size:12.3px;line-height:12.3px;color:#141414;font-weight:400;">Lagerplatz</div>
<div class="b" style="left:0px;top:794px;width:1326px;height:1px;background:#dccde0;"></div>
<div class="b" style="left:0;top:795px;width:1326px;height:23px;background:#329447;border-radius:0 0 5px 5px;overflow:hidden"><div class="b" style="left:0;top:0;width:1326px;height:1px;background:#2b8a3f"></div><div class="b" style="left:0;top:21px;width:1326px;height:1px;background:#22903a"></div><div class="b" style="left:0;top:22px;width:1326px;height:1px;background:#94bca0"></div></div>
<div class="b" style="left:1326px;top:795px;width:1px;height:23px;background:#9cc6a4;"></div>
</div></body></html>
